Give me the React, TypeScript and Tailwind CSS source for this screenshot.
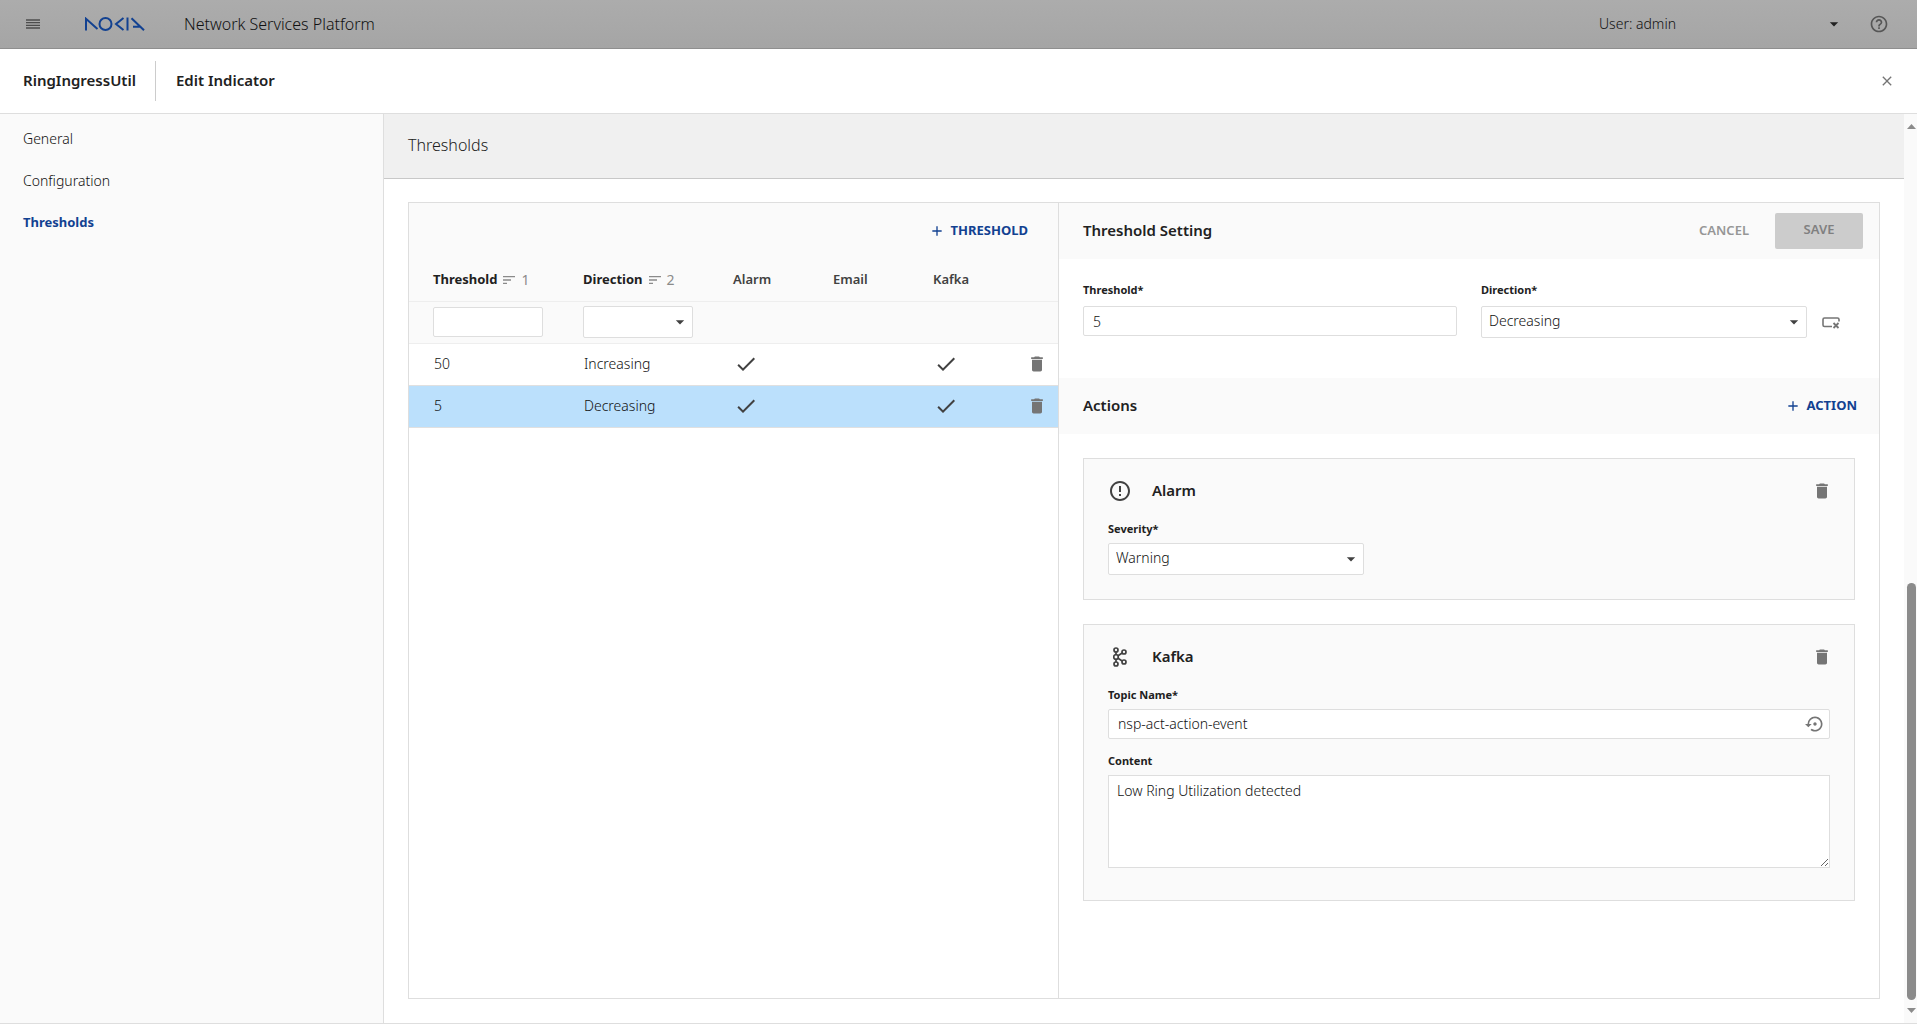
import { useState } from 'react';
import type { ReactNode } from 'react';
import {
    MdAdd,
    MdArrowDropDown,
    MdCheck,
    MdClose,
    MdDelete,
    MdErrorOutline,
    MdHelpOutline,
    MdSettingsBackupRestore,
    MdSort,
} from 'react-icons/md';

const NAV = ['General', 'Configuration', 'Thresholds'] as const;

const ROWS = [
    { value: '50', direction: 'Increasing', alarm: true, email: false, kafka: true },
    { value: '5', direction: 'Decreasing', alarm: true, email: false, kafka: true },
];

const DIRECTIONS = ['Increasing', 'Decreasing'];
const SEVERITIES = ['Warning', 'Minor', 'Major', 'Critical'];

function NokiaLogo() {
    return (
        <svg viewBox="0 0 60 14" className="h-[14px] w-[60px]" fill="none" stroke="#124191" strokeWidth="2" role="img" aria-label="Nokia">
            <path d="M1 13.500V1.800L12.500 12" />
            <circle cx="20.500" cy="7" r="6" />
            <path d="M38.500 1L31 7l7.500 6" />
            <path d="M42.500 .500v13" />
            <path d="M46.500 1.200L59 13.200M48 9.700h7" />
        </svg>
    );
}

function MenuIcon() {
    return (
        <svg viewBox="0 0 14 10" className="h-2.5 w-3.5" stroke="#4d4d4d" strokeWidth="1.300">
            <path d="M0 1h14M0 3.700h14M0 6.300h14M0 9h14" />
        </svg>
    );
}

// outlined field with a small x in the corner
function ClearFieldIcon() {
    return (
        <svg viewBox="0 0 18 12" className="h-3 w-[18px]" fill="none" stroke="#757575">
            <path d="M17 4.500V2.500Q17 1 15.500 1H2.500Q1 1 1 2.500v5.500Q1 9.500 2.500 9.500H10" strokeWidth="1.600" />
            <path d="M11.500 6l5 5M16.500 6l-5 5" strokeWidth="1.800" />
        </svg>
    );
}

function KafkaIcon() {
    return (
        <svg viewBox="0 0 14 20" className="h-5 w-3.5" fill="none" stroke="currentColor" strokeWidth="1.700">
            <circle cx="3" cy="3" r="2" />
            <circle cx="3" cy="10" r="2.300" />
            <circle cx="3" cy="17" r="2" />
            <circle cx="11" cy="5" r="2" />
            <circle cx="11" cy="15" r="2" />
            <path d="M3 5v2.700M3 12.300V15M5 8.700L9.200 6M5 11.300L9.200 14" />
        </svg>
    );
}

type SelectProps = {
    id?: string;
    label?: string;
    options: string[];
    defaultValue?: string;
    className?: string;
};

function Select({ id, label, options, defaultValue, className = '' }: SelectProps) {
    return (
        <div className={`relative ${className}`}>
            <select
                id={id}
                aria-label={label}
                defaultValue={defaultValue}
                className="block h-8 w-full appearance-none rounded-xs border border-[#dedede] bg-white pb-0.5 pl-[7px] pr-8 text-sm font-light text-[#111111] outline-none"
            >
                {options.map(o => (
                    <option key={o}>{o}</option>
                ))}
            </select>
            <MdArrowDropDown className="pointer-events-none absolute right-[3px] top-1.5 size-5 text-[#414141]" />
        </div>
    );
}

function Label({ htmlFor, children }: { htmlFor: string; children: ReactNode }) {
    return (
        <label htmlFor={htmlFor} className="block text-[11px] leading-4 font-bold">
            {children}
        </label>
    );
}

function ActionCard({ icon, title, className = '', children }: { icon: ReactNode; title: string; className?: string; children: ReactNode }) {
    return (
        <section className={`border border-[#dedede] bg-[#fafafa] px-6 pt-5 ${className}`}>
            <div className="flex h-6 items-center">
                <span className="flex size-6 items-center justify-center text-[#414141]">{icon}</span>
                <h3 className="ml-5 flex-1 pb-0.5 text-[15px] font-semibold">{title}</h3>
                <button type="button" aria-label={`Delete ${title}`} className="-mr-0.5 text-[#757575]">
                    <MdDelete className="size-5" />
                </button>
            </div>
            {children}
        </section>
    );
}

function ThresholdTable() {
    const [selected, setSelected] = useState(1);

    return (
        <div className="flex w-[650px] shrink-0 flex-col border-r border-[#dedede]">
            <div className="flex h-14 items-center justify-end bg-[#fafafa] pr-[30px]">
                <button type="button" className="flex items-center gap-1.5 text-[13px] font-bold text-[#124191]">
                    <MdAdd className="size-4" stroke="currentColor" />
                    THRESHOLD
                </button>
            </div>
            <table className="w-full table-fixed border-collapse text-left text-sm">
                <colgroup>
                    <col className="w-[174px]" />
                    <col className="w-[150px]" />
                    <col className="w-[100px]" />
                    <col className="w-[100px]" />
                    <col className="w-[75px]" />
                    <col />
                </colgroup>
                <thead className="bg-[#fafafa]">
                    <tr className="h-[42px] border-b border-[#eeeeee] text-[13px]">
                        <th className="pl-6 font-bold">
                            <span className="flex items-center">
                                Threshold
                                <MdSort className="ml-1 size-4 text-[#8a8a8a]" />
                                <span className="ml-1 text-sm font-normal text-[#8a8a8a]">1</span>
                            </span>
                        </th>
                        <th className="font-bold">
                            <span className="flex items-center">
                                Direction
                                <MdSort className="ml-1 size-4 text-[#8a8a8a]" />
                                <span className="ml-1 text-sm font-normal text-[#8a8a8a]">2</span>
                            </span>
                        </th>
                        <th className="font-semibold text-[#414141]">Alarm</th>
                        <th className="font-semibold text-[#414141]">Email</th>
                        <th className="font-semibold text-[#414141]">Kafka</th>
                        <th aria-label="Delete" />
                    </tr>
                    <tr className="h-[42px] border-b border-[#eeeeee]">
                        <td className="pl-6">
                            <input
                                aria-label="Filter threshold"
                                className="block h-[30px] w-[110px] rounded-xs border border-[#dedede] bg-white px-2 outline-none"
                            />
                        </td>
                        <td>
                            <Select label="Filter direction" options={['', ...DIRECTIONS]} className="w-[110px]" />
                        </td>
                        <td colSpan={4} />
                    </tr>
                </thead>
                <tbody className="font-light text-[#111111]">
                    {ROWS.map((r, i) => (
                        <tr
                            key={r.value}
                            onClick={() => setSelected(i)}
                            className={`h-[42px] border-b border-[#e0e0e0] ${i === selected ? 'bg-[#bbe0fc]' : 'bg-white'}`}
                        >
                            <td className="pl-[25px]">{r.value}</td>
                            <td className="pl-px">{r.direction}</td>
                            {[r.alarm, r.email, r.kafka].map((on, n) => (
                                <td key={n} className="pl-px">
                                    {on && <MdCheck className="size-6 text-[#414141]" aria-label="Yes" />}
                                </td>
                            ))}
                            <td>
                                <button type="button" aria-label={`Delete ${r.value}`} className="ml-[19px] block text-[#757575]">
                                    <MdDelete className="size-5" />
                                </button>
                            </td>
                        </tr>
                    ))}
                </tbody>
            </table>
        </div>
    );
}

function ThresholdForm() {
    return (
        <form className="flex min-w-0 flex-1 flex-col" onSubmit={e => e.preventDefault()}>
            <div className="flex h-14 items-center bg-[#fafafa] pl-6 pr-4">
                <h2 className="flex-1 pb-0.5 text-[15px] font-semibold">Threshold Setting</h2>
                <button type="button" className="mr-[26px] text-[13px] font-semibold text-[#969696]">CANCEL</button>
                <button type="submit" className="h-9 w-[88px] rounded-xs bg-[#cccccc] pb-0.5 text-[13px] font-semibold text-[#808080]">SAVE</button>
            </div>

            <div className="grid grid-cols-2 gap-6 px-6 pt-[23px] pb-10">
                <div>
                    <Label htmlFor="threshold">Threshold*</Label>
                    <input
                        id="threshold"
                        defaultValue="5"
                        className="mt-2 block h-[30px] w-full rounded-xs border border-[#dedede] bg-white px-[9px] text-sm font-light text-[#111111] outline-none"
                    />
                </div>
                <div>
                    <Label htmlFor="direction">Direction*</Label>
                    <div className="mt-2 flex items-center">
                        <Select id="direction" options={DIRECTIONS} defaultValue="Decreasing" className="flex-1" />
                        <button type="button" aria-label="Clear direction" className="flex w-12 justify-center pt-0.5">
                            <ClearFieldIcon />
                        </button>
                    </div>
                </div>
            </div>

            <div className="flex h-14 items-center bg-[#fafafa] pl-6 pr-[22px]">
                <h2 className="flex-1 pb-0.5 text-[15px] font-semibold">Actions</h2>
                <button type="button" className="flex items-center gap-1.5 text-[13px] font-bold text-[#124191]">
                    <MdAdd className="size-4" stroke="currentColor" />
                    ACTION
                </button>
            </div>

            <div className="flex flex-col gap-6 p-6">
                <ActionCard icon={<MdErrorOutline className="size-6" />} title="Alarm" className="pb-6">
                    <div className="mt-[18px]">
                        <Label htmlFor="severity">Severity*</Label>
                        <Select id="severity" options={SEVERITIES} defaultValue="Warning" className="mt-1.5 w-64" />
                    </div>
                </ActionCard>

                <ActionCard icon={<KafkaIcon />} title="Kafka" className="pb-8">
                    <div className="mt-[18px]">
                        <Label htmlFor="topic">Topic Name*</Label>
                        <div className="mt-1.5 flex h-[30px] items-center rounded-xs border border-[#dedede] bg-white pr-1">
                            <input
                                id="topic"
                                defaultValue="nsp-act-action-event"
                                className="min-w-0 flex-1 px-[9px] text-sm font-light text-[#111111] outline-none"
                            />
                            <button type="button" aria-label="Restore default" className="text-[#757575]">
                                <MdSettingsBackupRestore className="size-5" />
                            </button>
                        </div>
                    </div>
                    <div className="mt-3.5">
                        <Label htmlFor="content">Content</Label>
                        <textarea
                            id="content"
                            defaultValue="Low Ring Utilization detected"
                            className="mt-1.5 block h-[93px] w-full resize border border-[#dedede] bg-white px-2 py-[5px] text-sm font-light text-[#111111] outline-none"
                        />
                    </div>
                </ActionCard>
            </div>
        </form>
    );
}

function ScrollRail() {
    return (
        <div className="flex w-[13px] shrink-0 flex-col items-end bg-[#fafafa] py-2.5 pr-px" aria-hidden="true">
            <svg viewBox="0 0 9 5" className="h-[5px] w-[9px]"><path d="M0 5L4.500 0L9 5z" fill="#8b8b8b" /></svg>
            <div className="flex-[454]" />
            <div className="w-[9px] flex-[417] rounded-full bg-[#8b8b8b]" />
            <svg viewBox="0 0 9 5" className="mt-2 h-[5px] w-[9px]"><path d="M0 0L4.500 5L9 0z" fill="#8b8b8b" /></svg>
        </div>
    );
}

export default function App() {
    const [section, setSection] = useState<string>('Thresholds');

    return (
        <div className="flex min-h-screen flex-col bg-white pb-px font-['Noto_Sans','Open_Sans',sans-serif] text-[#212121]">
            <header className="flex h-[49px] shrink-0 items-center border-b border-[#8f8f8f] bg-linear-to-b from-[#acacac] to-[#a5a5a5] pl-[26px] pr-7">
                <button type="button" aria-label="Menu">
                    <MenuIcon />
                </button>
                <div className="ml-[45px]">
                    <NokiaLogo />
                </div>
                <h1 className="ml-[39px] flex-1 text-base font-light text-[#111111]">Network Services Platform</h1>
                <div className="relative w-[250px]">
                    <select aria-label="User" className="block w-full appearance-none pr-8 text-sm font-light text-[#111111] outline-none">
                        <option>User: admin</option>
                    </select>
                    <MdArrowDropDown className="pointer-events-none absolute right-[5px] top-0 size-5" />
                </div>
                <button type="button" aria-label="Help" className="ml-5 text-[#565656]">
                    <MdHelpOutline className="size-5" />
                </button>
            </header>

            <div className="flex h-[65px] shrink-0 items-center border-b border-[#dedede] pl-[23px] pr-[22px]">
                <span className="pb-0.5 text-[15px] font-semibold">RingIngressUtil</span>
                <span className="ml-[19px] mr-5 h-10 w-px bg-[#cccccc]" />
                <span className="flex-1 pb-0.5 text-[15px] font-semibold">Edit Indicator</span>
                <button type="button" aria-label="Close" className="text-[#757575]">
                    <MdClose className="size-4" stroke="currentColor" />
                </button>
            </div>

            <div className="flex flex-1 border-b border-[#dedede]">
                <nav className="w-96 shrink-0 border-r border-[#dedede] bg-[#fafafa] pt-1">
                    {NAV.map(item => (
                        <a
                            key={item}
                            href={`#${item.toLowerCase()}`}
                            onClick={() => setSection(item)}
                            className={`flex h-[42px] items-center pl-[23px] ${item === section ? 'text-[13px] font-bold text-[#124191]' : 'text-sm font-light text-[#111111]'}`}
                        >
                            {item}
                        </a>
                    ))}
                </nav>

                <main className="flex min-w-0 flex-1 flex-col">
                    <div className="flex h-[65px] items-center border-b border-[#c8c8c8] bg-[#f0f0f0] pb-0.5 pl-6 text-base font-light">
                        Thresholds
                    </div>
                    <div className="flex flex-1 p-6 pt-[23px]">
                        <div className="flex flex-1 border border-[#dedede]">
                            <ThresholdTable />
                            <ThresholdForm />
                        </div>
                    </div>
                </main>

                <ScrollRail />
            </div>
        </div>
    );
}
